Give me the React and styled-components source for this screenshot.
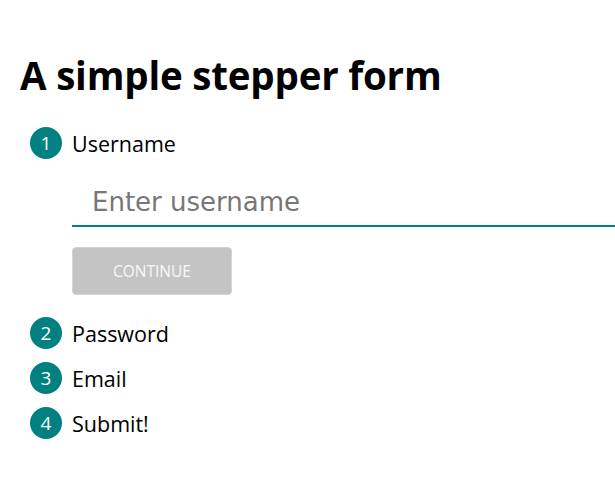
import React, { useState } from 'react';
import styled, { createGlobalStyle } from 'styled-components';

const Global = createGlobalStyle`
  body {
    margin: 0;
    background: #fff;
    font-family: "Open Sans", "Noto Sans", sans-serif;
    color: #000;
  }
`;

const Page = styled.div`
  padding: 49px 0 0 20px;
  overflow: hidden;
`;

const Title = styled.h1`
  margin: 0 0 26px;
  font-size: 38.5px;
  line-height: 52px;
  font-weight: 700;
  letter-spacing: -0.2px;
`;

const Steps = styled.div`
  display: flex;
  flex-direction: column;
  gap: 13px;
  padding-left: 10px;
`;

const Step = styled.div`
  display: flex;
  flex-direction: column;
`;

const Head = styled.div`
  display: flex;
  align-items: center;
  gap: 10px;
  height: 32px;
`;

const Num = styled.span`
  width: 32px;
  height: 32px;
  border-radius: 50%;
  background: #008080;
  color: #fff;
  font-size: 19px;
  display: flex;
  align-items: center;
  justify-content: center;
`;

const Label = styled.span`
  font-size: 21.5px;
`;

const Body = styled.div`
  padding-left: 42px;
  margin-right: -20px;
  padding-top: 20px;
  padding-bottom: 9px;
`;

const Input = styled.input`
  display: block;
  width: 100%;
  box-sizing: border-box;
  height: 48px;
  border: none;
  border-bottom: 2px solid #008080;
  outline: none;
  padding: 0 20px;
  font-family: "DejaVu Sans", Verdana, sans-serif;
  font-size: 26px;
  &::placeholder {
    color: #777;
  }
`;

const Button = styled.button`
  margin-top: 20px;
  width: 160px;
  height: 48px;
  background: #c4c4c4;
  border: 1px solid #d4d4d4;
  border-radius: 4px;
  color: #f8f8f8;
  font-family: "Open Sans", "Noto Sans", sans-serif;
  font-size: 15.5px;
  text-transform: uppercase;
  cursor: default;
`;

const steps = ['Username', 'Password', 'Email', 'Submit!'];

export default function App() {
  const [active] = useState(0);
  const [value, setValue] = useState('');

  return (
    <Page>
      <Global />
      <Title>A simple stepper form</Title>
      <Steps>
        {steps.map((s, i) => (
          <Step key={s}>
            <Head>
              <Num>{i + 1}</Num>
              <Label>{s}</Label>
            </Head>
            {i === active ? (
              <Body>
                <Input
                  placeholder="Enter username"
                  value={value}
                  onChange={(e) => setValue(e.target.value)}
                />
                <Button disabled={!value}>Continue</Button>
              </Body>
            ) : null}
          </Step>
        ))}
      </Steps>
    </Page>
  );
}
